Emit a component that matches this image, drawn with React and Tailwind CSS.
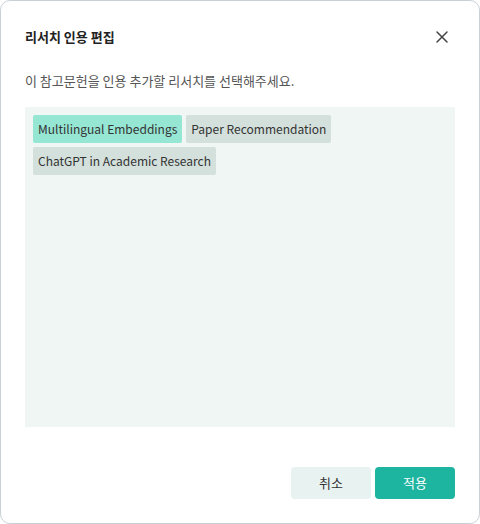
const researches = [
  { name: 'Multilingual Embeddings', selected: true },
  { name: 'Paper Recommendation', selected: false },
  { name: 'ChatGPT in Academic Research', selected: false },
];

export default function App() {
  return (
    <div
      className="w-[480px] h-[524px] bg-white"
      style={{ fontFamily: '"Noto Sans CJK KR", "Noto Sans", sans-serif' }}
    >
      <div className="w-full h-full flex flex-col border border-[#c9d1d6] rounded-[10px] px-6 pt-[25px] pb-6">
        <div className="flex items-center justify-between h-[22px]">
          <h2 className="text-[13px] font-bold text-[#222] leading-[22px]">리서치 인용 편집</h2>
          <button className="w-[22px] h-[22px] flex items-center justify-center mr-[2px]">
            <svg width="14" height="14" viewBox="0 0 14 14" fill="none" stroke="#444" strokeWidth="1.5" strokeLinecap="round">
              <path d="M2 2 L12 12 M12 2 L2 12" />
            </svg>
          </button>
        </div>
        <p className="mt-[22px] text-[13px] text-[#555] leading-[22px]">
          이 참고문헌을 인용 추가할 리서치를 선택해주세요.
        </p>
        <div className="mt-[15px] h-[320px] bg-[#f0f6f4] p-2 flex flex-wrap content-start gap-1">
          {researches.map((r) => (
            <button
              key={r.name}
              className={`h-[28px] px-[5px] rounded-[2px] text-[12px] text-[#333] leading-[28px] ${r.selected ? 'bg-[#96e6d4]' : 'bg-[#d4e0dc]'}`}
            >
              {r.name}
            </button>
          ))}
        </div>
        <div className="mt-auto flex justify-end gap-1">
          <button className="w-[80px] h-[32px] rounded-[4px] bg-[#e8f2f1] text-[13px] text-[#333]">취소</button>
          <button className="w-[80px] h-[32px] rounded-[4px] bg-[#1db5a0] text-[13px] text-white">적용</button>
        </div>
      </div>
    </div>
  );
}
